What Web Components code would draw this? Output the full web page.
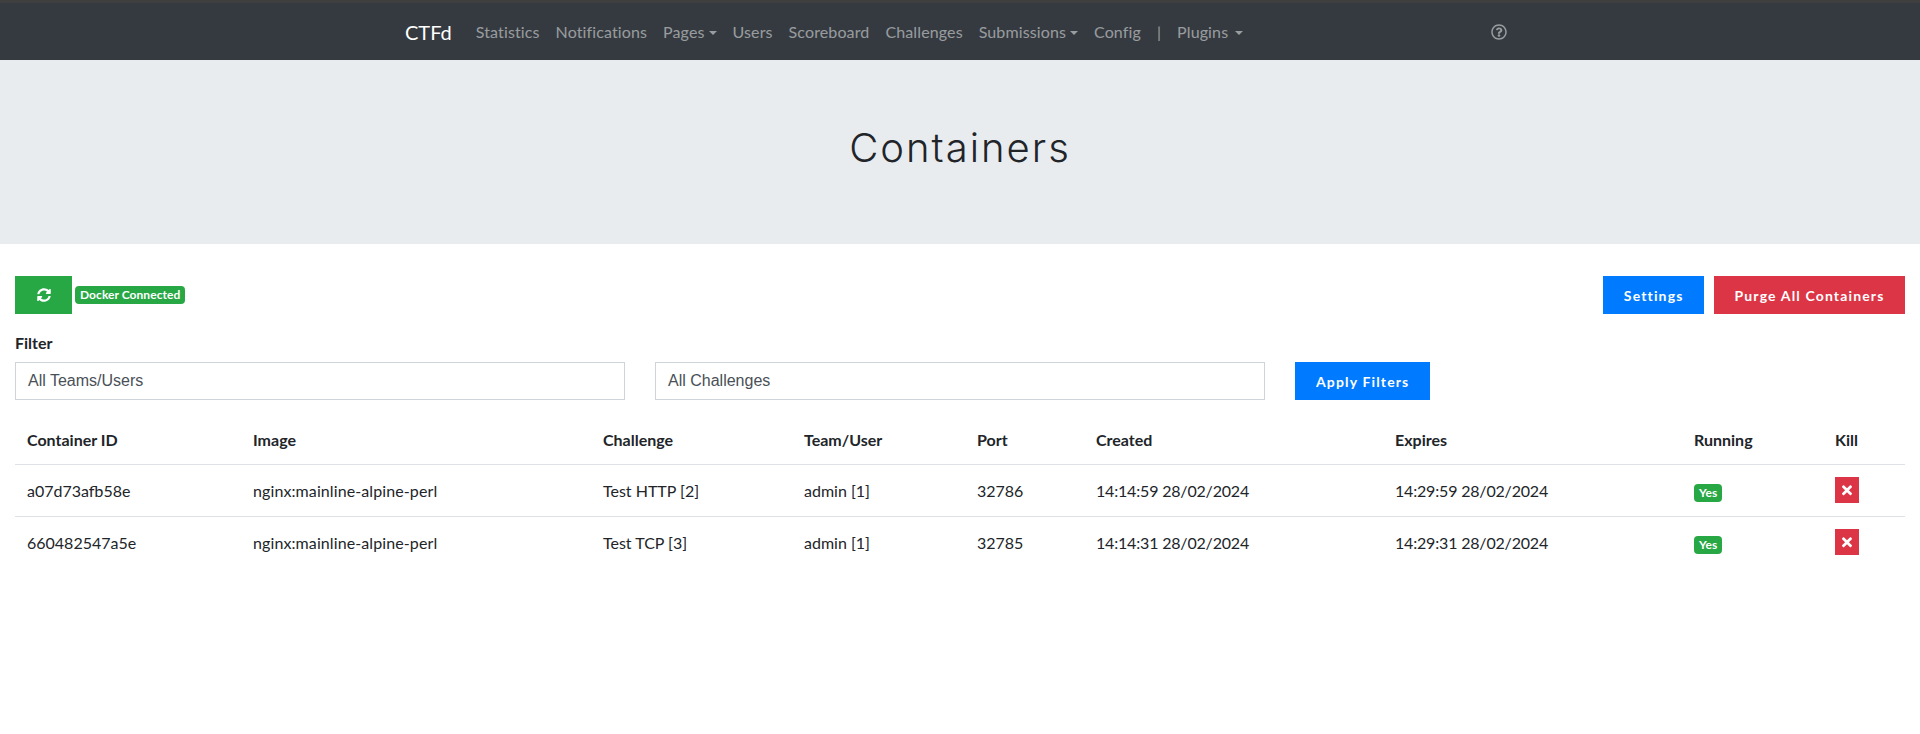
<!DOCTYPE html>
<html><head><meta charset="utf-8">
<style>html,body{margin:0;padding:0;background:#fff;font-family:Lato,"Liberation Sans",sans-serif;color:#212529;font-size:16px;line-height:1.5}</style>
</head><body>
<template id="t-nav"><style>
:host{display:block;height:60px;box-sizing:border-box;background:#343a40;border-top:3px solid #3e3f3e;color:rgba(255,255,255,.5);font-size:16px}
.in{width:1140px;margin:0 auto;display:flex;align-items:center;height:57px;padding-left:15px;box-sizing:border-box;position:relative;letter-spacing:.12px}
b{font-weight:400;color:#fff;font-size:20px;margin-right:16px;letter-spacing:0}
span{padding:0 8px}
span.c::after{content:"";display:inline-block;margin-left:4px;vertical-align:3px;border-top:4.8px solid;border-left:4.8px solid transparent;border-right:4.8px solid transparent}
span.p::after{margin-left:7px}
svg{position:absolute;left:1101px;top:21px}
</style><div class="in"><b>CTFd</b><span>Statistics</span><span>Notifications</span><span class="c">Pages</span><span>Users</span><span>Scoreboard</span><span>Challenges</span><span class="c">Submissions</span><span>Config</span><span>|</span><span class="c p">Plugins</span>
<svg width="16" height="16" viewBox="0 0 512 512" fill="currentColor"><path d="M256 8C119.043 8 8 119.083 8 256c0 136.997 111.043 248 248 248s248-111.003 248-248C504 119.083 392.957 8 256 8zm0 448c-110.532 0-200-89.431-200-200 0-110.495 89.472-200 200-200 110.491 0 200 89.471 200 200 0 110.53-89.431 200-200 200zm107.244-255.2c0 67.052-72.421 68.084-72.421 92.863V300c0 6.627-5.373 12-12 12h-45.647c-6.627 0-12-5.373-12-12v-8.659c0-35.745 27.1-50.034 47.579-61.516 17.561-9.845 28.324-16.541 28.324-29.579 0-17.246-21.999-28.693-39.784-28.693-23.189 0-33.894 10.977-48.942 29.969-4.057 5.12-11.46 6.071-16.666 2.124l-27.824-21.098c-5.107-3.872-6.251-11.066-2.644-16.363C184.846 131.491 214.94 112 261.794 112c49.071 0 101.45 38.304 101.45 88.8zM298 368c0 23.159-18.841 42-42 42s-42-18.841-42-42 18.841-42 42-42 42 18.841 42 42z"/></svg></div></template>
<template id="t-hero"><style>:host{display:flex;height:184px;background:#e9ecef;align-items:center;justify-content:center;padding-bottom:8px;box-sizing:border-box}h1{margin:0;font:300 40px/1.2 Inter,Lato,sans-serif;letter-spacing:2px;color:#212529}</style><h1><slot></slot></h1></template>
<template id="t-btn"><style>:host{display:inline-flex;align-items:center;justify-content:center;box-sizing:border-box;height:38px;padding:0 var(--p,20.5px);background:var(--c,#007bff);color:#fff;font-weight:700;font-size:14px;letter-spacing:1.15px}</style><slot></slot></template>
<template id="t-badge"><style>:host{display:inline-block;background:#28a745;color:#fff;font-weight:700;font-size:12px;line-height:1;padding:3px 5px;border-radius:4px;letter-spacing:.05px}</style><slot></slot></template>
<template id="t-select"><style>:host{display:flex;align-items:center;box-sizing:border-box;width:610px;height:38px;border:1px solid #ced4da;padding:0 12px;color:#495057;font-family:"Liberation Sans",sans-serif;font-size:16px}</style><slot></slot></template>
<template id="t-kill"><style>:host{display:inline-flex;align-items:center;justify-content:center;width:24px;height:26px;background:#dc3545}</style><svg width="10" height="14.5" viewBox="0 0 352 512" fill="#fff"><path d="M242.72 256l100.07-100.07c12.28-12.28 12.28-32.19 0-44.48l-22.24-22.24c-12.28-12.28-32.19-12.28-44.48 0L176 189.28 75.93 89.21c-12.28-12.28-32.19-12.28-44.48 0L9.21 111.45c-12.28 12.28-12.28 32.19 0 44.48L109.28 256 9.21 356.07c-12.28 12.28-12.28 32.19 0 44.48l22.24 22.24c12.28 12.28 32.2 12.28 44.48 0L176 322.72l100.07 100.07c12.28 12.28 32.2 12.28 44.48 0l22.24-22.24c12.28-12.28 12.28-32.19 0-44.48L242.72 256z"/></svg></template>
<template id="t-main"><style>
:host{display:block;padding:32px 15px 0}
.top{display:flex;align-items:center;gap:3px;height:38px}.sp{flex:1}
.f{font-weight:700;font-size:16px;margin:17px 0 7px;line-height:24px}
.fl{display:flex;gap:30px}
table{border-collapse:collapse;margin-top:16px;width:100%;font-size:16px;table-layout:fixed}
th{text-align:left;font-weight:700;padding:12px;height:24px}
td{padding:12px;border-top:1px solid #dee2e6;height:27px}
td.d{letter-spacing:-.18px}td.i{letter-spacing:.1px}
</style><div class="top"><ctf-btn style="--c:#28a745;width:57px"><svg width="14" height="14" viewBox="0 0 512 512" fill="#fff"><path d="M370.72 133.28C339.458 104.008 298.888 87.962 255.848 88c-77.458.068-144.328 53.178-162.791 126.85-1.344 5.363-6.122 9.15-11.651 9.15H24.103c-7.498 0-13.194-6.807-11.807-14.176C33.933 94.924 134.813 8 256 8c66.448 0 126.791 26.136 171.315 68.685L463.03 40.97C478.149 25.851 504 36.559 504 57.941V192c0 13.255-10.745 24-24 24H345.941c-21.382 0-32.09-25.851-16.971-40.971l41.75-41.749zM32 296h134.059c21.382 0 32.09 25.851 16.971 40.971l-41.75 41.75c31.262 29.273 71.835 45.319 114.876 45.28 77.418-.07 144.315-53.144 162.787-126.849 1.344-5.363 6.122-9.15 11.651-9.15h57.304c7.498 0 13.194 6.807 11.807 14.176C478.067 417.076 377.187 504 256 504c-66.448 0-126.791-26.136-171.315-68.685L48.97 471.03C33.851 486.149 8 475.441 8 454.059V320c0-13.255 10.745-24 24-24z"/></svg></ctf-btn><ctf-badge>Docker Connected</ctf-badge><div class="sp"></div><ctf-btn style="--p:20.5px">Settings</ctf-btn><ctf-btn style="--c:#dc3545;margin-left:7px">Purge All Containers</ctf-btn></div>
<div class="f">Filter</div>
<div class="fl"><ctf-select>All Teams/Users</ctf-select><ctf-select>All Challenges</ctf-select><ctf-btn style="--p:21px">Apply Filters</ctf-btn></div>
<table><colgroup><col style="width:226px"><col style="width:350px"><col style="width:201px"><col style="width:173px"><col style="width:119px"><col style="width:299px"><col style="width:299px"><col style="width:141px"><col></colgroup>
<tr><th>Container ID</th><th>Image</th><th>Challenge</th><th>Team/User</th><th>Port</th><th>Created</th><th>Expires</th><th>Running</th><th>Kill</th></tr>
<tr><td>a07d73afb58e</td><td class="i">nginx:mainline-alpine-perl</td><td>Test HTTP [2]</td><td>admin [1]</td><td>32786</td><td class="d">14:14:59 28/02/2024</td><td class="d">14:29:59 28/02/2024</td><td><ctf-badge>Yes</ctf-badge></td><td><ctf-kill></ctf-kill></td></tr>
<tr><td>660482547a5e</td><td class="i">nginx:mainline-alpine-perl</td><td>Test TCP [3]</td><td>admin [1]</td><td>32785</td><td class="d">14:14:31 28/02/2024</td><td class="d">14:29:31 28/02/2024</td><td><ctf-badge>Yes</ctf-badge></td><td><ctf-kill></ctf-kill></td></tr>
</table></template>
<ctf-nav></ctf-nav><ctf-hero>Containers</ctf-hero><ctf-main></ctf-main>
<script>
for(const n of ['nav','hero','btn','badge','select','kill','main']){
customElements.define('ctf-'+n,class extends HTMLElement{constructor(){super();this.attachShadow({mode:'open'}).appendChild(document.getElementById('t-'+n).content.cloneNode(true))}})}
</script>
</body></html>
